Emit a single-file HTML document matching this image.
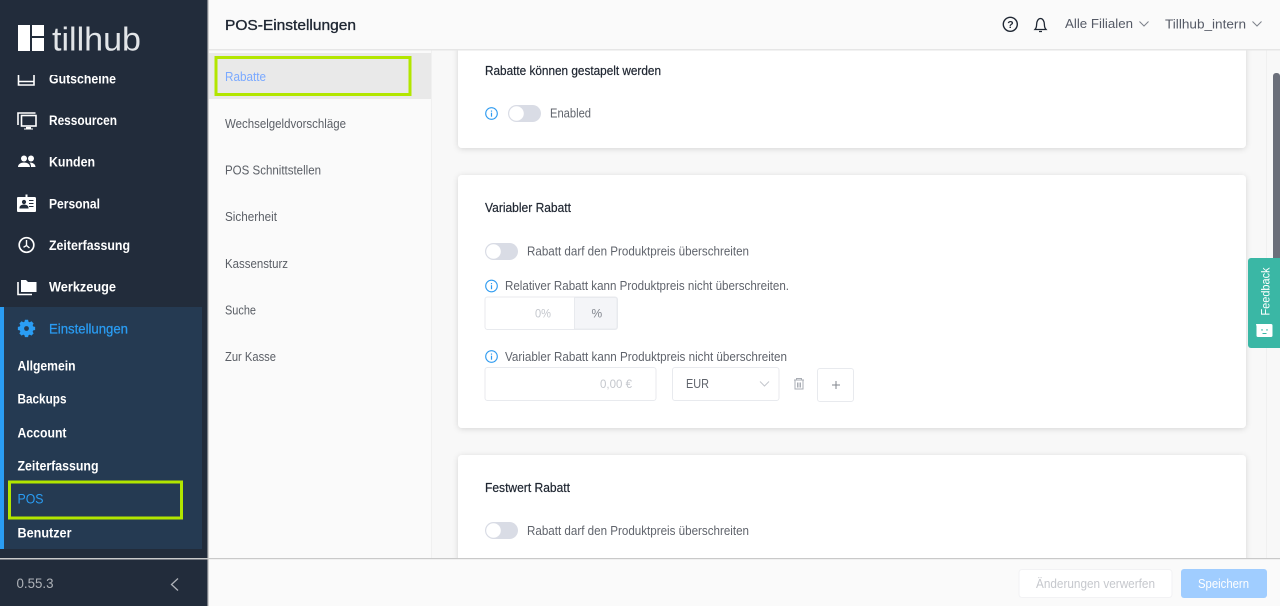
<!DOCTYPE html>
<html lang="de"><head><meta charset="utf-8"><title>POS-Einstellungen</title>
<style>html,body{margin:0;padding:0;width:1280px;height:606px;overflow:hidden;background:#fff}svg{display:block}text{font-family:"Liberation Sans",sans-serif}</style></head>
<body>
<svg width="1280" height="606" viewBox="0 0 1280 606" xmlns="http://www.w3.org/2000/svg">
<!-- main bg -->
<rect width="1280" height="606" fill="#f8f8f8"/>
<!-- sub nav -->
<rect x="208" y="50" width="223" height="510" fill="#fafafa"/>
<rect x="431" y="50" width="1" height="510" fill="#f0f0f0"/>
<rect x="209" y="53" width="222" height="46" fill="#e9e9e9"/>
<rect x="216" y="57.500" width="194" height="37" fill="none" stroke="#b2e600" stroke-width="3"/>
<g font-size="12.500" fill="#5b5f66">
<text x="225" y="81" fill="#7aa9ff" textLength="41" lengthAdjust="spacingAndGlyphs">Rabatte</text>
<text x="225" y="128" textLength="121" lengthAdjust="spacingAndGlyphs">Wechselgeldvorschläge</text>
<text x="225" y="174.500" textLength="96" lengthAdjust="spacingAndGlyphs">POS Schnittstellen</text>
<text x="225" y="221" textLength="52" lengthAdjust="spacingAndGlyphs">Sicherheit</text>
<text x="225" y="268" textLength="63" lengthAdjust="spacingAndGlyphs">Kassensturz</text>
<text x="225" y="314.500" textLength="31" lengthAdjust="spacingAndGlyphs">Suche</text>
<text x="225" y="361" textLength="51" lengthAdjust="spacingAndGlyphs">Zur Kasse</text>
</g>
<!-- cards -->
<defs><filter id="s" x="-5%" y="-20%" width="110%" height="140%"><feDropShadow dx="0" dy="1" stdDeviation="3" flood-color="#000" flood-opacity=".14"/></filter>
<g id="i"><circle cx="0" cy="0" r="5.800" fill="none" stroke="#2f9bf0" stroke-width="1.100"/><rect x="-.6" y="-.8" width="1.200" height="4" fill="#2f9bf0"/><rect x="-.6" y="-3" width="1.200" height="1.200" fill="#2f9bf0"/></g>
<g id="t"><rect x="0" y="0" width="33" height="17" rx="8.500" fill="#d9dce5"/><circle cx="8.500" cy="8.500" r="7.300" fill="#fff"/></g></defs>
<rect x="458" y="30" width="788" height="118" rx="4" fill="#fff" filter="url(#s)"/>
<rect x="458" y="175" width="788" height="253" rx="4" fill="#fff" filter="url(#s)"/>
<rect x="458" y="455" width="788" height="140" rx="4" fill="#fff" filter="url(#s)"/>
<g font-size="12.500" fill="#1e2530" stroke="#1e2530" stroke-width=".2">
<text x="485" y="75" textLength="176" lengthAdjust="spacingAndGlyphs">Rabatte können gestapelt werden</text>
<text x="485" y="212" textLength="86" lengthAdjust="spacingAndGlyphs">Variabler Rabatt</text>
<text x="485" y="492" textLength="85" lengthAdjust="spacingAndGlyphs">Festwert Rabatt</text>
</g>
<use href="#i" x="491.500" y="113.500"/>
<use href="#t" x="508" y="105"/>
<use href="#t" x="485" y="243"/>
<use href="#t" x="485" y="522"/>
<use href="#i" x="491.500" y="286"/>
<use href="#i" x="491.500" y="356.500"/>
<g font-size="12.500" fill="#60646c">
<text x="550" y="117.500" textLength="41" lengthAdjust="spacingAndGlyphs">Enabled</text>
<text x="527" y="255.500" textLength="222" lengthAdjust="spacingAndGlyphs">Rabatt darf den Produktpreis überschreiten</text>
<text x="505" y="290" textLength="284" lengthAdjust="spacingAndGlyphs">Relativer Rabatt kann Produktpreis nicht überschreiten.</text>
<text x="505" y="361" textLength="282" lengthAdjust="spacingAndGlyphs">Variabler Rabatt kann Produktpreis nicht überschreiten</text>
<text x="527" y="535" textLength="222" lengthAdjust="spacingAndGlyphs">Rabatt darf den Produktpreis überschreiten</text>
</g>
<!-- percent input -->
<rect x="485" y="297" width="132.500" height="32.500" rx="2.500" fill="#fff" stroke="#e8eaee"/>
<path d="M574.500 297.500H615a2 2 0 0 1 2 2V327a2 2 0 0 1-2 2h-40.500z" fill="#f4f5f8" stroke="#e8eaee"/>
<text x="535" y="317.500" font-size="12" fill="#c4c7cd" textLength="16" lengthAdjust="spacingAndGlyphs">0%</text>
<text x="591.500" y="317.500" font-size="12" fill="#82868e">%</text>
<!-- amount -->
<rect x="485" y="367.500" width="171" height="33" rx="2.500" fill="#fff" stroke="#e8eaee"/>
<text x="600" y="388" font-size="12" fill="#c4c7cd" textLength="32" lengthAdjust="spacingAndGlyphs">0,00 €</text>
<rect x="672.500" y="367.500" width="106.500" height="33" rx="2.500" fill="#fff" stroke="#e8eaee"/>
<text x="686" y="388" font-size="12.500" fill="#60646c" textLength="23" lengthAdjust="spacingAndGlyphs">EUR</text>
<path d="M760 381.500l4.500 4.500 4.500-4.500" fill="none" stroke="#c4c7cd" stroke-width="1"/>
<g fill="none" stroke="#a9adb4" stroke-width="1"><path d="M794 380h10M796.500 380v-1.500h5v1.500M795 380.500v8.500h8v-8.500M797.500 382.500v5M799 382.500v5M800.500 382.500v5"/></g>
<rect x="817.500" y="368.500" width="36" height="33" rx="2.500" fill="#fff" stroke="#e8eaee"/>
<path d="M832 385h8M836 381v8" stroke="#82868e" stroke-width="1"/>
<!-- scrollbar -->
<rect x="1266" y="50" width="14" height="510" fill="#f8f8f8"/>
<rect x="1266" y="50" width="1" height="510" fill="#f0f0f0"/>
<rect x="1273" y="73" width="7" height="200" rx="3" fill="#6b6f7a"/>
<!-- feedback -->
<path d="M1251 258h29v90h-29a3 3 0 0 1-3-3v-84a3 3 0 0 1 3-3z" fill="#3ab7a5"/>
<text transform="translate(1269.500 315.500) rotate(-90)" font-size="12" fill="#fff" textLength="48" lengthAdjust="spacingAndGlyphs">Feedback</text>
<path d="M1256 324h15a1.500 1.500 0 0 1 1.500 1.500v10a1.500 1.500 0 0 1-1.500 1.500h-13a1.500 1.500 0 0 1-1.500-1.500v-9z" fill="#fff"/>
<path d="M1262 329v1.800M1267 329v1.800M1262.500 333.500h4" stroke="#3ab7a5" stroke-width="1.100"/>
<!-- header -->
<rect x="208" y="0" width="1072" height="49" fill="#fafafa"/>
<rect x="208" y="49" width="1072" height="1.500" fill="#e6e6e6"/>
<text x="225" y="30" font-size="15" fill="#1f2733" stroke="#1f2733" stroke-width=".35" textLength="131" lengthAdjust="spacingAndGlyphs">POS-Einstellungen</text>
<circle cx="1010.300" cy="24.300" r="7" fill="none" stroke="#1f2733" stroke-width="1.400"/>
<text x="1007.300" y="28" font-size="10.500" font-weight="bold" fill="#1f2733">?</text>
<path d="M1035 29.500c1.300-1.400 1.600-2.800 1.600-5 0-3 1.500-6 3.900-6s3.900 3 3.900 6c0 2.200.3 3.600 1.600 5zM1034.500 29.500h12M1039 31.500h3" fill="none" stroke="#1f2733" stroke-width="1.300"/>
<g font-size="13" fill="#555a66">
<text x="1065" y="28" textLength="68" lengthAdjust="spacingAndGlyphs">Alle Filialen</text>
<text x="1165" y="28.500" textLength="81" lengthAdjust="spacingAndGlyphs">Tillhub_intern</text>
</g>
<path d="M1139.500 21.500l4.500 4.500 4.500-4.500M1252.500 21.500l4.500 4.500 4.500-4.500" fill="none" stroke="#7c818a" stroke-width="1"/>
<!-- footer -->
<rect x="208" y="558" width="1072" height="48" fill="#fafafa"/>
<rect x="208" y="558" width="1072" height="1.200" fill="#c9c9c9"/>
<rect x="1019" y="569.500" width="153" height="28" rx="3" fill="#fff" stroke="#f2f2f4"/>
<text x="1036" y="588" font-size="12.500" fill="#c6c8cd" textLength="119" lengthAdjust="spacingAndGlyphs">Änderungen verwerfen</text>
<rect x="1181" y="569" width="86" height="29" rx="3" fill="#a0cdff"/>
<text x="1198" y="588" font-size="12.500" fill="#fff" textLength="51" lengthAdjust="spacingAndGlyphs">Speichern</text>
<!-- sidebar -->
<rect x="0" y="0" width="207.500" height="606" fill="#222c3b"/>
<rect x="207.500" y="0" width="1.500" height="606" fill="#d0d0d0"/>
<rect x="0" y="307" width="202" height="242" fill="#253a52"/>
<rect x="0" y="307" width="4" height="242" fill="#2a9df4"/>
<rect x="0" y="558" width="208" height="1.500" fill="#c9c9c9"/>
<!-- logo -->
<path d="M18 25h12v26H18zM32 25h12v11H32zM32 38h12v13H32z" fill="#fff"/>
<text x="52" y="50.500" font-size="33" fill="#e2e5e8" textLength="89" lengthAdjust="spacingAndGlyphs">tillhub</text>
<!-- gutscheine clipped -->
<svg x="0" y="75" width="208" height="15" viewBox="0 75 208 15">
<text x="49" y="83.500" font-size="13.500" font-weight="bold" fill="#fff" textLength="67" lengthAdjust="spacingAndGlyphs">Gutscheine</text>
<path d="M18.500 75v10h15.500V75M18.500 81.500h15.500" fill="none" stroke="#fff" stroke-width="1.600"/>
</svg>
<g font-size="13.500" font-weight="bold" fill="#fff">
<text x="49" y="125" textLength="68" lengthAdjust="spacingAndGlyphs">Ressourcen</text>
<text x="49" y="166.500" textLength="46" lengthAdjust="spacingAndGlyphs">Kunden</text>
<text x="49" y="208.500" textLength="51" lengthAdjust="spacingAndGlyphs">Personal</text>
<text x="49" y="250" textLength="81" lengthAdjust="spacingAndGlyphs">Zeiterfassung</text>
<text x="49" y="291.500" textLength="67" lengthAdjust="spacingAndGlyphs">Werkzeuge</text>
<text x="49" y="333.500" fill="#2a9df4" textLength="79" lengthAdjust="spacingAndGlyphs" style="font-weight:normal" stroke="#2a9df4" stroke-width=".25">Einstellungen</text>
<text x="17.500" y="370.500" textLength="58" lengthAdjust="spacingAndGlyphs">Allgemein</text>
<text x="17.500" y="403.500" textLength="49" lengthAdjust="spacingAndGlyphs">Backups</text>
<text x="17.500" y="437.500" textLength="49" lengthAdjust="spacingAndGlyphs">Account</text>
<text x="17.500" y="470.500" textLength="81" lengthAdjust="spacingAndGlyphs">Zeiterfassung</text>
<text x="17.500" y="503.500" fill="#2a9df4" textLength="26" lengthAdjust="spacingAndGlyphs" style="font-weight:normal">POS</text>
<text x="17.500" y="537.500" textLength="54" lengthAdjust="spacingAndGlyphs">Benutzer</text>
</g>
<rect x="9.500" y="482" width="172" height="36" fill="none" stroke="#b2e600" stroke-width="3"/>
<text x="16.500" y="588" font-size="13.500" fill="#aeb2b8" textLength="37" lengthAdjust="spacingAndGlyphs">0.55.3</text>
<path d="M178 578.500l-6.500 6 6.500 6" fill="none" stroke="#aeb2b8" stroke-width="1.300"/>
<!-- sidebar icons -->
<g fill="none" stroke="#fff" stroke-width="1.600">
<path d="M18 125v-12h17.500"/>
<rect x="21.500" y="115.500" width="14.500" height="10.500"/>
</g>
<path d="M26 127h5v1.500h2v1h-9v-1h2z" fill="#fff"/>
<!-- people -->
<circle cx="24" cy="158.500" r="3" fill="#fff"/><circle cx="31" cy="158.500" r="3" fill="#fff"/>
<path d="M18 167c0-3 3-4.500 6-4.500s6 1.500 6 4.500zM29.500 162.500c3 0 6 1.500 6 4.500H31c0-2-.5-3.300-1.500-4.500z" fill="#fff"/>
<!-- id card -->
<path d="M18.500 197h7v-2.500h2v2.500h7.500a1.500 1.500 0 0 1 1 1v13a1 1 0 0 1-1 1H18a1 1 0 0 1-1-1v-13a1 1 0 0 1 1-1z" fill="#fff"/>
<circle cx="24" cy="202" r="2.100" fill="#222c3b"/>
<path d="M20 208c0-2 2-3 4-3s4 1 4 3zM29 200.500h4.500M29 203.500h4.500M29 206.500h4.500" fill="#222c3b" stroke="#222c3b" stroke-width="1.100"/>
<!-- clock -->
<circle cx="26.500" cy="245" r="7.300" fill="none" stroke="#fff" stroke-width="1.700"/>
<path d="M26.500 240v5.500l-3 1.800M26.500 245.500l3 2.500" fill="none" stroke="#fff" stroke-width="1.400"/>
<!-- folder -->
<path d="M18 282v12.500h14" fill="none" stroke="#fff" stroke-width="1.600"/>
<path d="M21 280h5l2 2h8.500v10H21z" fill="#fff"/>
<!-- gear -->
<path d="M24.600 321h3.800l.5 2.300 1.500.7 2.100-1.200 2.600 2.700-1.200 2 .7 1.600 2.300.5v3.700l-2.300.5-.7 1.600 1.200 2-2.600 2.700-2.100-1.200-1.500.7-.5 2.300h-3.800l-.5-2.300-1.500-.7-2.100 1.200-2.600-2.700 1.200-2-.7-1.600-2.300-.5v-3.700l2.300-.5.7-1.600-1.200-2 2.600-2.700 2.100 1.200 1.500-.7z" fill="#2a9df4" transform="translate(26.500 328.500) scale(.83) translate(-26.500 -331.500)"/>
<circle cx="26.500" cy="328.500" r="2.400" fill="#253a52"/>
</svg>
</body></html>
